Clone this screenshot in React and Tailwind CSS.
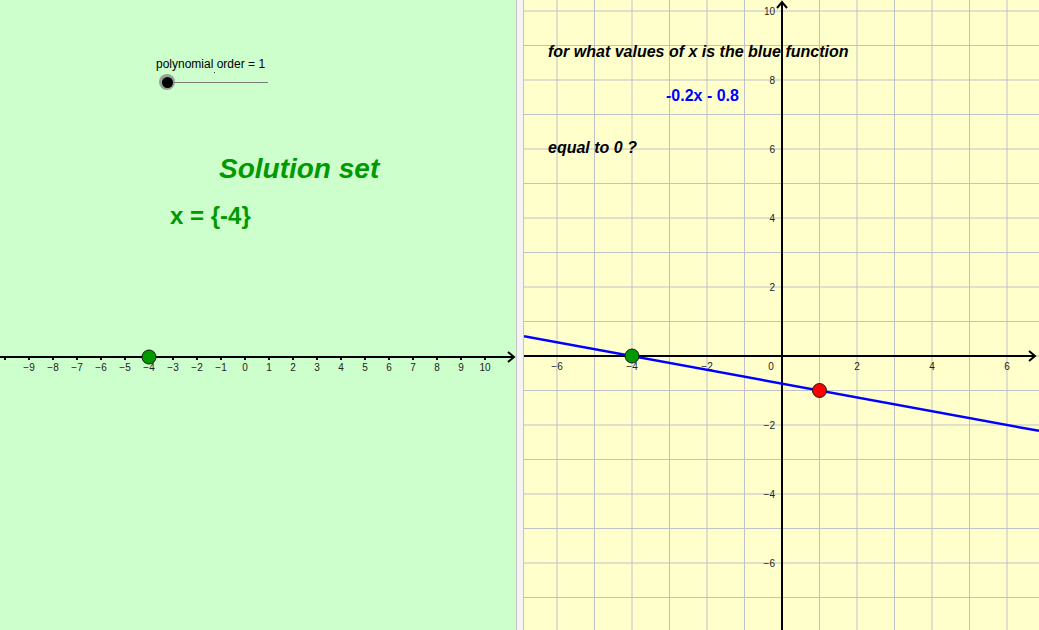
import React from 'react';

const GREEN = '#009900';
const FONT = '"Liberation Sans", Arial, sans-serif';

// left panel number line: origin x=245, 24px per unit, axis at y=357
const NumberLine = () => {
    const ox = 245, oy = 357, u = 24;
    const ticks = [];
    for (let k = -10; k <= 10; k++) ticks.push(k);
    return (
        <svg className="absolute inset-0" width="516" height="630" style={{ fontFamily: FONT }}>
            <line x1="0" y1={oy} x2="514" y2={oy} stroke="#000" strokeWidth="2" />
            <polyline points={`508,${oy - 5} 514,${oy} 508,${oy + 5}`} fill="none" stroke="#000" strokeWidth="2" />
            {ticks.map(k => (
                <line key={k} x1={ox + k * u} y1={oy} x2={ox + k * u} y2={oy + 3} stroke="#000" strokeWidth="2" />
            ))}
            {ticks.filter(k => k > -10).map(k => (
                <text key={k} x={ox + k * u} y={oy + 14} fontSize="10" fill="#222" textAnchor="middle">
                    {k < 0 ? `\u2212${-k}` : k}
                </text>
            ))}
            <circle cx={149} cy={oy} r="7" fill={GREEN} stroke="#1a1a1a" strokeWidth="1" />
        </svg>
    );
};

// right panel graph: origin at (258, 356) inside the panel, 37.5px per x unit, 34.5px per y unit
const Graph = () => {
    const w = 515, h = 630, ox = 258, oy = 356, ux = 37.5, uy = 34.5;
    const vx = [], hy = [];
    for (let k = -6; k <= 6; k++) vx.push(ox + k * ux);
    for (let k = -10; k <= 7; k++) hy.push(oy + k * uy);
    const f = x => -0.2 * x - 0.8;
    const xl = -ox / ux, xr = (w - ox) / ux;
    const xLabels = [-6, -4, -2, 2, 4, 6];
    const yLabels = [10, 8, 6, 4, 2, -2, -4, -6];
    return (
        <svg className="absolute inset-0" width={w} height={h} style={{ fontFamily: FONT }}>
            {vx.map(x => <line key={'v' + x} x1={x} y1="0" x2={x} y2={h} stroke="#c0c0c8" strokeWidth="1" />)}
            {hy.map(y => <line key={'h' + y} x1="0" y1={y} x2={w} y2={y} stroke="#c0c0c8" strokeWidth="1" />)}

            <line x1="0" y1={oy} x2={w - 4} y2={oy} stroke="#000" strokeWidth="2" />
            <polyline points={`${w - 10},${oy - 5} ${w - 4},${oy} ${w - 10},${oy + 5}`} fill="none" stroke="#000" strokeWidth="2" />
            <line x1={ox} y1="2" x2={ox} y2={h} stroke="#000" strokeWidth="2" />
            <polyline points={`${ox - 5},8 ${ox},2 ${ox + 5},8`} fill="none" stroke="#000" strokeWidth="2" />

            {xLabels.map(k => (
                <text key={'x' + k} x={ox + k * ux} y={oy + 14} fontSize="10" fill="#222" textAnchor="middle">
                    {k < 0 ? `\u2212${-k}` : k}
                </text>
            ))}
            <text x={ox - 11} y={oy + 14} fontSize="10" fill="#222" textAnchor="middle">0</text>
            {yLabels.map(k => (
                <text key={'y' + k} x={ox - 7} y={oy - k * uy + 4} fontSize="10" fill="#222" textAnchor="end">
                    {k < 0 ? `\u2212${-k}` : k}
                </text>
            ))}

            <line x1="0" y1={oy - f(xl) * uy} x2={w} y2={oy - f(xr) * uy} stroke="#0000ff" strokeWidth="2.5" />
            <circle cx={ox - 4 * ux} cy={oy} r="7" fill={GREEN} stroke="#1a1a1a" strokeWidth="1" />
            <circle cx={ox + ux} cy={oy + uy} r="7" fill="#ff0000" stroke="#1a1a1a" strokeWidth="1" />
        </svg>
    );
};

// slider widget: caption above a track with a knob at its left end
const Slider = () => (
    <div className="absolute left-[156px] top-[58px] flex flex-col items-start gap-[4px]">
        <div className="text-[12px] leading-none text-black whitespace-nowrap">polynomial order = 1</div>
        <div className="relative ml-[3px] w-[109px] h-[16px] flex items-center">
            <div className="ml-[8px] w-[101px] h-[1px] bg-[#7a7a7a]" />
            <div className="absolute left-0 top-0 w-[16px] h-[16px] rounded-full bg-[#8a8a8a]/80 flex items-center justify-center">
                <div className="w-[11px] h-[11px] rounded-full bg-black" />
            </div>
        </div>
    </div>
);

export default function App() {
    return (
        <div className="flex w-[1039px] h-[630px] overflow-hidden" style={{ fontFamily: FONT }}>
            <div className="relative w-[516px] h-full shrink-0 bg-[#ccffcc]">
                <NumberLine />
                <Slider />
                <span className="absolute left-[214px] top-[72px] w-[1px] h-[1px] bg-[#333]" />
                <div className="absolute left-[219px] top-[155px] text-[28px] leading-none font-bold italic text-[#009900] whitespace-nowrap">
                    Solution set
                </div>
                <div className="absolute left-[170px] top-[204px] text-[24px] leading-none font-bold text-[#009900] whitespace-nowrap">
                    x = {'{-4}'}
                </div>
            </div>
            <div className="w-[8px] h-full shrink-0 bg-[#f4f4f4] border-x border-[#c4c4c4]" />
            <div className="relative flex-1 h-full bg-[#ffffcc] overflow-hidden">
                <Graph />
                <div className="absolute left-[24px] top-[44px] text-[16px] leading-none font-bold italic text-black whitespace-nowrap">
                    for what values of x is the blue function
                </div>
                <div className="absolute left-[142px] top-[88px] text-[16px] leading-none font-bold text-[#0000ff] whitespace-nowrap">
                    -0.2x - 0.8
                </div>
                <div className="absolute left-[24px] top-[140px] text-[16px] leading-none font-bold italic text-black whitespace-nowrap">
                    equal to 0 ?
                </div>
            </div>
        </div>
    );
}
